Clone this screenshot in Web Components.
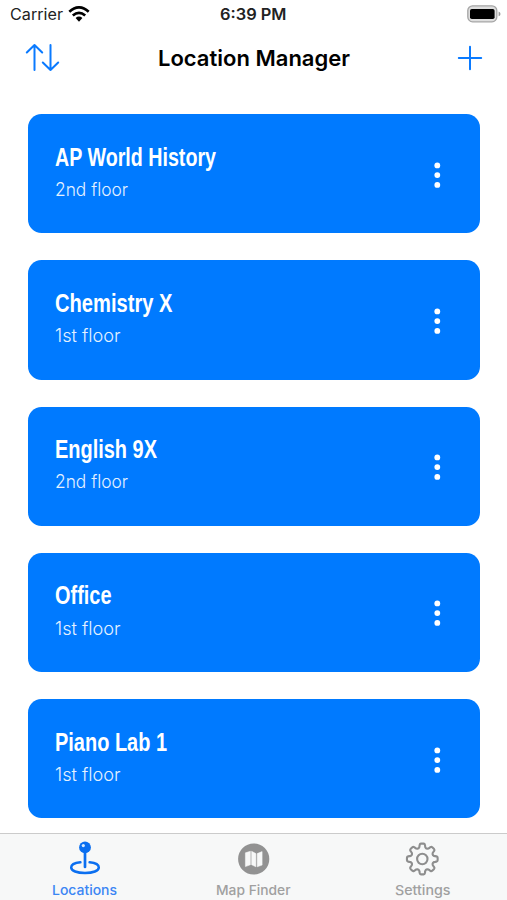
<!DOCTYPE html>
<html lang="en">
<head>
<meta charset="utf-8">
<title>Location Manager</title>
<style>
html,body{margin:0;height:100%}
body{background:#fff;overflow:hidden;font-family:Inter,"Liberation Sans",sans-serif}
</style>
</head>
<body>
<app-screen></app-screen>
<script>
const define = (name, html, setup) => {
  const t = document.createElement('template');
  t.innerHTML = html;
  customElements.define(name, class extends HTMLElement {
    constructor() {
      super();
      this.attachShadow({mode: 'open'}).append(t.content.cloneNode(true));
    }
    connectedCallback() { if (setup) setup(this, this.shadowRoot); }
  });
};

/* One line of text scaled horizontally to the width given in its "w" attribute. */
define('fit-text', `<style>
:host{display:block;white-space:nowrap}
span{display:inline-block;transform-origin:0 50%}
</style><span><slot></slot></span>`, (el, root) => {
  const w = +el.getAttribute('w');
  const s = root.querySelector('span');
  el.style.width = w + 'px';
  const natural = s.getBoundingClientRect().width;
  if (natural) s.style.transform = 'scaleX(' + w / natural + ')';
});

define('status-bar', `<style>
:host{display:grid;grid-template-columns:1fr auto 1fr;height:30px;line-height:30.6px;font-size:15.5px;color:#222}
.left{display:flex;padding-left:9.5px}
.left svg{margin:6px 0 0 5.5px}
.time{font-weight:600}
.right{display:flex;justify-content:flex-end;padding:5px 6px 0 0}
</style>
<div class="left"><fit-text w="53">Carrier</fit-text>
<svg width="22" height="17" viewBox="0 0 22 17" fill="none" stroke="#000" stroke-width="2.7"><path d="M1.3 5.7Q11-2.9 20.7 5.7"/><path d="M4.8 9.5Q11 4.1 17.2 9.5"/><path d="M7.6 12Q11 9.1 14.4 12L11 15.7Z" fill="#000" stroke="none"/></svg></div>
<fit-text class="time" w="66.5">6:39 PM</fit-text>
<div class="right"><svg width="34" height="18" viewBox="0 0 34 18"><rect x=".8" y=".8" width="29" height="16" rx="4.8" fill="#dedede" stroke="#a5a5a5" stroke-width="1.3"/><rect x="3" y="4" width="24.6" height="10" rx="1.8" fill="#000"/><path d="M31.6 6.6Q33.5 7.3 33.5 9T31.6 11.3Z" fill="#999"/></svg></div>`);

define('nav-bar', `<style>
:host{display:grid;grid-template-columns:1fr auto 1fr;height:55px;line-height:56px;font-size:22px;font-weight:600;color:#000}
svg{fill:none;stroke:#0a7aff;stroke-width:2;stroke-linecap:round;stroke-linejoin:round}
.sort{margin:13px 0 0 25px}
.add{margin:15px 24px 0 0;justify-self:end}
fit-text{position:relative;left:.7px}
</style>
<svg class="sort" width="36" height="30" viewBox="0 0 36 30"><path d="M9.5 27V2M1.8 9.5L9.5 2L17.2 9.5M25.5 2V27M17.8 19.5L25.5 27L33.2 19.5"/></svg>
<fit-text w="192">Location Manager</fit-text>
<svg class="add" width="26" height="26" viewBox="0 0 26 26"><path d="M13 1.8V24.2M1.8 13H24.2"/></svg>`);

define('location-card', `<style>
:host{display:flex;justify-content:space-between;box-sizing:border-box;height:119.2px;border-radius:13.5px;background:#007aff;color:#fff;padding:27.6px 37.5px 0 26.6px}
.name{font:700 25px/30px "Liberation Sans Narrow","Liberation Sans",sans-serif}
.floor{font-size:18.4px;font-weight:300;line-height:26px;margin-top:4.2px;color:#e4f1ff}
svg{margin-top:17.8px}
</style>
<div><fit-text class="name"></fit-text><fit-text class="floor"></fit-text></div>
<svg width="12" height="30" viewBox="0 0 12 30" fill="#fff"><circle cx="6.3" cy="5.4" r="2.9"/><circle cx="6.3" cy="15.1" r="2.9"/><circle cx="6.3" cy="24.9" r="2.9"/></svg>`, (el, root) => {
  for (const [cls, text, width] of [['.name', 'name', 'nw'], ['.floor', 'floor', 'fw']]) {
    const f = root.querySelector(cls);
    f.textContent = el.getAttribute(text);
    f.setAttribute('w', el.getAttribute(width));
    f.replaceWith(f.cloneNode(true));
  }
});

define('tab-item', `<style>
:host{display:flex;flex-direction:column;align-items:center;flex:1;color:#a0a0a0;font-size:13.3px;font-weight:500;line-height:16px}
:host([active]){color:#3b86f4}
.icon{height:42px;padding-top:6px;display:block}
</style><div class="icon"><slot name="icon"></slot></div><slot></slot>`);

define('tab-bar', `<style>
:host{display:flex;box-sizing:border-box;height:67px;border-top:1.3px solid #cbcbcb;background:#f7f8f8}
svg{display:block}
</style>
<tab-item active><svg slot="icon" width="36" height="36" viewBox="0 0 36 36"><g fill="none" stroke="#0b6ff0" stroke-width="2.5" stroke-linecap="round"><path d="M13.4 22.3C7.3 22.9 4.2 25 4.2 27.5C4.2 30.9 10 33 18 33S31.8 30.9 31.8 27.5C31.8 25 28.7 22.9 22.6 22.3"/><path d="M18 11V27" stroke-width="2.7"/></g><circle cx="18" cy="7.4" r="5.9" fill="#0b6ff0"/><circle cx="16.3" cy="5.6" r="1.6" fill="#d9eaff"/></svg><fit-text w="65">Locations</fit-text></tab-item>
<tab-item><svg slot="icon" width="36" height="36" viewBox="0 0 36 36"><g transform="translate(-.6 .4)"><circle cx="18.3" cy="18.6" r="15.6" fill="#929292"/><path d="M10 12.4L15 10.9V24.4L10 26.2ZM16.2 10.9L20.5 13.2V26.4L16.2 24.4ZM21.8 13.2L26.7 11.2V24.7L21.8 26.4Z" fill="#f7f8f8" stroke="#f7f8f8" stroke-width=".5" stroke-linejoin="round"/></g></svg><fit-text w="74.5">Map Finder</fit-text></tab-item>
<tab-item><svg slot="icon" width="36" height="36" viewBox="-17.3 -19 36 36" fill="none" stroke="#8e8e8e" stroke-width="2.1" stroke-linejoin="round"><path id="gear"/><circle r="5.2"/></svg><fit-text w="55.5">Settings</fit-text></tab-item>`, (el, root) => {
  /* Eight rounded teeth, each drawn from its left root to its right root. */
  let d = '';
  for (let i = 0; i < 8; i++) {
    const p = (r, a) => {
      const q = (i * 45 - 90 + a) * Math.PI / 180;
      return (r * Math.cos(q)).toFixed(2) + ' ' + (r * Math.sin(q)).toFixed(2);
    };
    d += (i ? 'L' : 'M') + p(11.4, -19) + 'Q' + p(12, -13.5) + ' ' + p(13.1, -12.5)
      + 'L' + p(14.4, -10.5) + 'Q' + p(15.5, -9) + ' ' + p(15.4, -5)
      + 'L' + p(15.4, 5) + 'Q' + p(15.5, 9) + ' ' + p(14.4, 10.5)
      + 'L' + p(13.1, 12.5) + 'Q' + p(12, 13.5) + ' ' + p(11.4, 19);
  }
  root.getElementById('gear').setAttribute('d', d + 'Z');
});

define('app-screen', `<style>
:host{display:flex;flex-direction:column;height:900px;width:507px;background:#fff}
main{flex:1;min-height:0;display:flex;flex-direction:column;gap:27.05px;padding:29.2px 27px 0 28px}
location-card{flex:none}
tab-bar{flex:none}
</style>
<status-bar></status-bar>
<nav-bar></nav-bar>
<main>
<location-card name="AP World History" nw="161" floor="2nd floor" fw="73"></location-card>
<location-card name="Chemistry X" nw="117.5" floor="1st floor" fw="65.5"></location-card>
<location-card name="English 9X" nw="102" floor="2nd floor" fw="73"></location-card>
<location-card name="Office" nw="56.5" floor="1st floor" fw="65.5"></location-card>
<location-card name="Piano Lab 1" nw="112" floor="1st floor" fw="65.5"></location-card>
</main>
<tab-bar></tab-bar>`);
</script>
</body>
</html>
